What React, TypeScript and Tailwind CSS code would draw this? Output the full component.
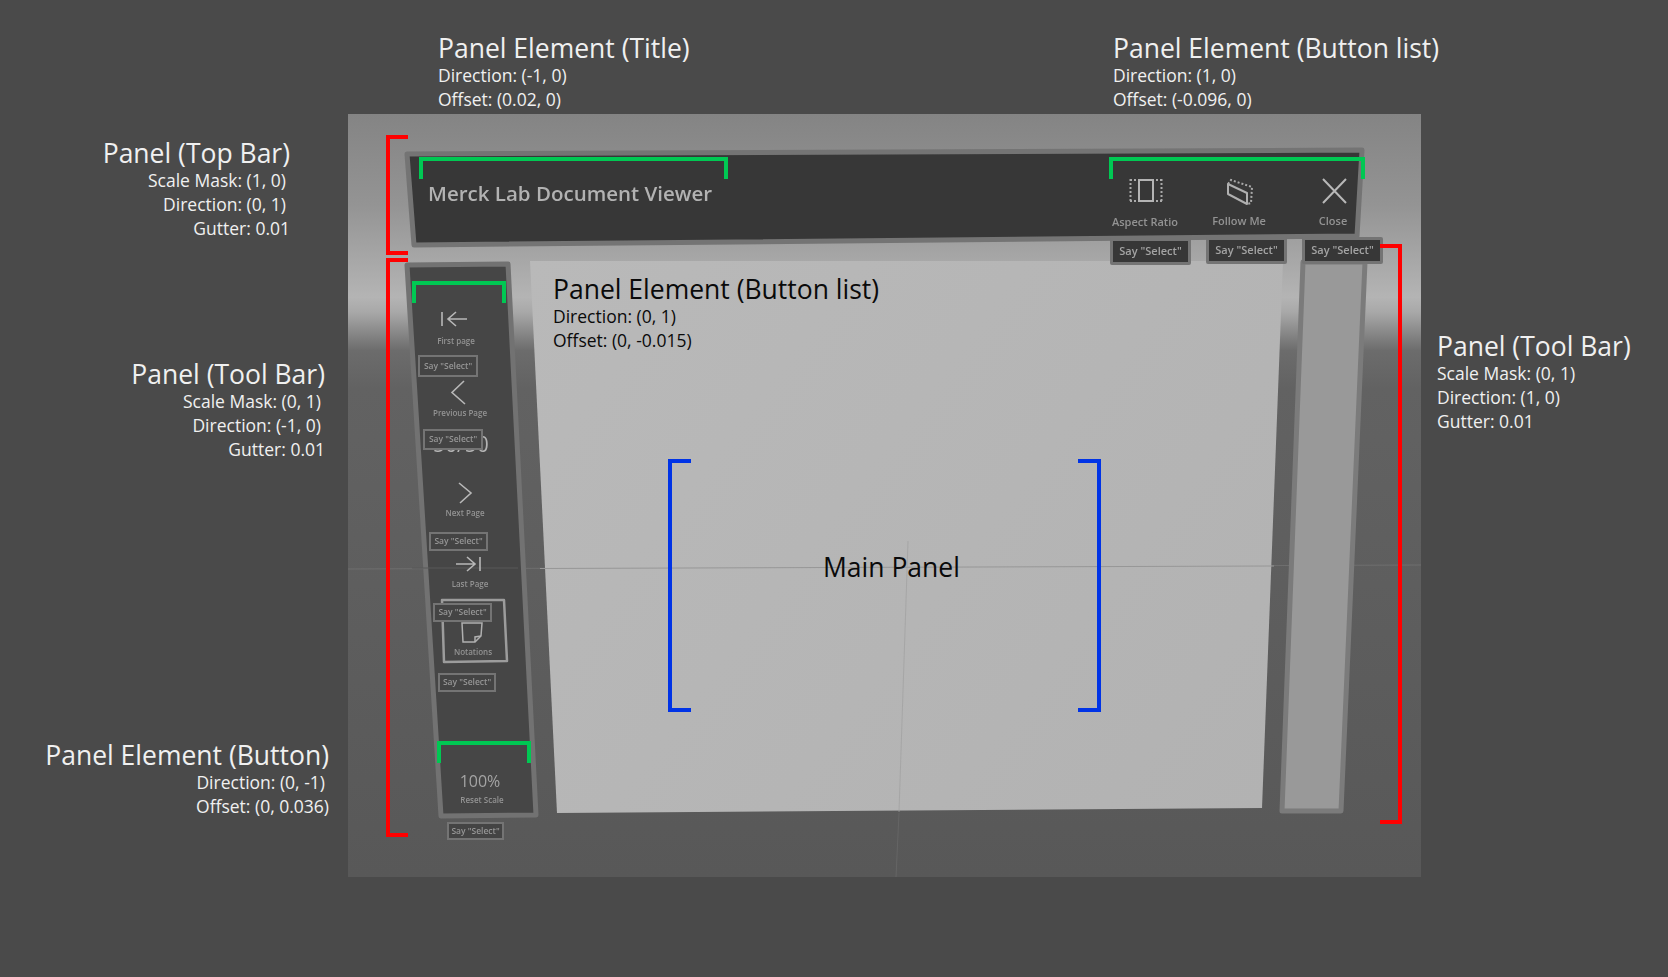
const Chip = ({ className }: { className: string }) => (
  <div
    className={`absolute flex items-center justify-center border-2 border-[#747474] bg-[#444] text-[8.5px] font-semibold text-[#969696] blur-[0.3px] ${className}`}
  >
    {'Say "Select"'}
  </div>
);

const TopChip = ({ className }: { className: string }) => (
  <div
    className={`flex h-[27px] w-[81px] items-center justify-center rounded-[2px] border-[3px] border-[#747474] bg-[#373737] text-[11px] font-semibold text-[#a4a4a4] blur-[0.3px] ${className}`}
  >
    {'Say "Select"'}
  </div>
);

const Caption = ({ className, text }: { className: string; text: string }) => (
  <div className={`absolute -translate-x-1/2 -translate-y-1/2 whitespace-nowrap font-semibold leading-none text-[#939393] blur-[0.3px] ${className}`}>
    {text}
  </div>
);

const Bracket = ({ className }: { className: string }) => <div className={`absolute ${className}`} />;

const Scene = () => (
  <svg className="absolute left-0 top-0" width="1668" height="977" viewBox="0 0 1668 977" fill="none">
    <defs>
      <linearGradient id="room" x1="0" y1="114" x2="0" y2="877" gradientUnits="userSpaceOnUse">
        <stop offset="0" stopColor="#848484" />
        <stop offset="0.12" stopColor="#949494" />
        <stop offset="0.24" stopColor="#b4b4b4" />
        <stop offset="0.26" stopColor="#a8a8a8" />
        <stop offset="0.29" stopColor="#848484" />
        <stop offset="0.31" stopColor="#6c6c6c" />
        <stop offset="0.36" stopColor="#626262" />
        <stop offset="1" stopColor="#585858" />
      </linearGradient>
      <linearGradient id="wall" x1="530" y1="258" x2="1262" y2="813" gradientUnits="userSpaceOnUse">
        <stop offset="0" stopColor="#b9b9b9" />
        <stop offset="1" stopColor="#b2b2b2" />
      </linearGradient>
    </defs>

    <rect x="348" y="114" width="1073" height="763" fill="url(#room)" />
    <path d="M348 569 L1421 565" stroke="#6f6f6f" strokeWidth="1" />
    <path d="M899 813 L896 877" stroke="#656565" strokeWidth="1" />

    {/* main panel */}
    <polygon points="530,261 1283,261 1262,808 557,813" fill="url(#wall)" />
    <path d="M540 568.5 L1274 566" stroke="#979797" strokeWidth="1" />
    <path d="M908 541 L899 812" stroke="#a0a0a0" strokeOpacity="0.7" strokeWidth="1" />

    {/* right tool bar */}
    <polygon points="1303,262 1365,262 1341,811 1282,811" fill="#999" stroke="#7b7b7b" strokeWidth="5" strokeLinejoin="round" />

    {/* left tool bar */}
    <polygon points="407,265 508,264 536,815 441,816" fill="#464646" stroke="#727272" strokeWidth="5" strokeLinejoin="round" />
    <path d="M412 568 L518 568" stroke="#585858" strokeWidth="1" />

    {/* top bar */}
    <polygon points="407,154 1362,150 1357,236 414,245" fill="#373737" stroke="#747474" strokeWidth="5" strokeLinejoin="round" />

    {/* aspect ratio icon */}
    <rect x="1139" y="180" width="14" height="21" stroke="#b4b4b4" strokeWidth="2" />
    <path d="M1130.5 179v23M1161.5 179v23M1130 180h6M1156 180h6M1130 201h6M1156 201h6" stroke="#aaa" strokeWidth="2" strokeDasharray="2 2" />

    {/* follow me icon */}
    <path d="M1228 184 L1247 193 L1247 204 L1228 194 Z" stroke="#b0b0b0" strokeWidth="2" strokeLinejoin="round" />
    <path d="M1228 184 L1231 180 L1252 187 L1251 203 L1247 204" stroke="#aaa" strokeWidth="2" strokeDasharray="2 2" />

    {/* close icon */}
    <path d="M1323 179 L1346 203 M1346 179 L1323 203" stroke="#b8b8b8" strokeWidth="2" />

    {/* first page */}
    <path d="M442 312v14M467 319h-19M456 312l-8 7 8 7" stroke="#b8b8b8" strokeWidth="1.6" />
    {/* previous */}
    <path d="M464 381 L452 392.5 L465 404" stroke="#b8b8b8" strokeWidth="1.6" />
    {/* next */}
    <path d="M459 483 L471 493 L460 503" stroke="#b8b8b8" strokeWidth="1.6" />
    {/* last page */}
    <path d="M456 564h19M467 557l8 7-8 7M480 557v14" stroke="#b8b8b8" strokeWidth="1.6" />

    {/* notations */}
    <path d="M442 600 L504 600 L507 661 L444 662 Z" stroke="#9c9c9c" strokeWidth="2.5" strokeLinejoin="round" />
    <path d="M462 623 L482 623 L481 636 L475 642 L463 642 Z" stroke="#b0b0b0" strokeWidth="1.5" />
    <path d="M481 636 L475 637 L475 642" stroke="#b0b0b0" strokeWidth="1.5" />
  </svg>
);

const Note = ({ className, title, lines, align }: { className: string; title: string; lines: string[]; align?: string }) => (
  <div className={`absolute flex flex-col ${align ?? ''} ${className}`}>
    <span className="text-[26.5px] leading-[28px]">{title}</span>
    <div className={`mt-px flex flex-col ${align ?? ''}`}>
      {lines.map((line) => (
        <span key={line} className="pr-[4px] text-[17.5px] leading-[24px] last:pr-0">
          {line}
        </span>
      ))}
    </div>
  </div>
);

export default function App() {
  return (
    <div className="relative h-[977px] w-[1668px] overflow-hidden bg-[#4a4a4a] font-['Open_Sans',sans-serif]">
      <Scene />

      {/* text inside the captured scene */}
      <div className="absolute left-[428px] top-[178px] whitespace-nowrap text-[20.5px] font-semibold leading-[30px] text-[#b2b2b2] blur-[0.3px]">
        Merck Lab Document Viewer
      </div>
      <Caption className="left-[1145px] top-[221px] text-[11px]" text="Aspect Ratio" />
      <Caption className="left-[1239px] top-[220px] text-[11px]" text="Follow Me" />
      <Caption className="left-[1333px] top-[220px] text-[11px]" text="Close" />
      <div className="absolute left-[1110px] top-[238px] flex items-start gap-[15px]">
        <TopChip className="" />
        <TopChip className="-mt-px" />
        <TopChip className="-mt-px" />
      </div>

      <Caption className="left-[456px] top-[341px] text-[8px]" text="First page" />
      <Caption className="left-[460px] top-[413px] text-[8px]" text="Previous Page" />
      <div className="absolute left-[433px] top-[431px] text-[21px] leading-[26px] text-[#b4b4b4] blur-[0.3px]">50/50</div>
      <Caption className="left-[465px] top-[513px] text-[8px]" text="Next Page" />
      <Caption className="left-[470px] top-[584px] text-[8px]" text="Last Page" />
      <Caption className="left-[473px] top-[652px] text-[8px]" text="Notations" />
      <div className="absolute left-[480px] top-[781px] -translate-x-1/2 -translate-y-1/2 text-[16px] leading-none text-[#a4a4a4] blur-[0.3px]">100%</div>
      <Caption className="left-[482px] top-[800px] text-[8px]" text="Reset Scale" />

      <Chip className="left-[418px] top-[355px] h-[22px] w-[60px]" />
      <Chip className="left-[423px] top-[429px] h-[21px] w-[60px]" />
      <Chip className="left-[429px] top-[532px] h-[19px] w-[59px]" />
      <Chip className="left-[433px] top-[603px] h-[19px] w-[59px]" />
      <Chip className="left-[438px] top-[673px] h-[19px] w-[58px]" />
      <Chip className="left-[447px] top-[822px] h-[18px] w-[57px]" />

      {/* brackets */}
      <Bracket className="left-[386px] top-[135px] h-[120px] w-[22px] border-y-4 border-l-4 border-[#ff0000]" />
      <Bracket className="left-[386px] top-[258px] h-[579px] w-[22px] border-y-4 border-l-4 border-[#ff0000]" />
      <Bracket className="left-[1380px] top-[244px] h-[580px] w-[22px] border-y-4 border-r-4 border-[#ff0000]" />
      <Bracket className="left-[419px] top-[157px] h-[22px] w-[309px] border-x-4 border-t-4 border-[#00c853]" />
      <Bracket className="left-[1109px] top-[157px] h-[22px] w-[256px] border-x-4 border-t-4 border-[#00c853]" />
      <Bracket className="left-[412px] top-[281px] h-[22px] w-[94px] border-x-4 border-t-4 border-[#00c853]" />
      <Bracket className="left-[437px] top-[741px] h-[22px] w-[94px] border-x-4 border-t-4 border-[#00c853]" />
      <Bracket className="left-[668px] top-[459px] h-[253px] w-[23px] border-y-4 border-l-4 border-[#0033e6]" />
      <Bracket className="left-[1078px] top-[459px] h-[253px] w-[23px] border-y-4 border-r-4 border-[#0033e6]" />

      {/* annotations */}
      <Note className="left-[438px] top-[34px] text-[#f0f0f0]" title="Panel Element (Title)" lines={['Direction: (-1, 0)', 'Offset: (0.02, 0)']} />
      <Note className="left-[1113px] top-[34px] text-[#f0f0f0]" title="Panel Element (Button list)" lines={['Direction: (1, 0)', 'Offset: (-0.096, 0)']} />
      <Note className="right-[1378px] top-[139px] text-[#f0f0f0]" align="items-end" title="Panel (Top Bar)" lines={['Scale Mask: (1, 0)', 'Direction: (0, 1)', 'Gutter: 0.01']} />
      <Note className="right-[1343px] top-[360px] text-[#f0f0f0]" align="items-end" title="Panel (Tool Bar)" lines={['Scale Mask: (0, 1)', 'Direction: (-1, 0)', 'Gutter: 0.01']} />
      <Note className="right-[1339px] top-[741px] text-[#f0f0f0]" align="items-end" title="Panel Element (Button)" lines={['Direction: (0, -1)', 'Offset: (0, 0.036)']} />
      <Note className="left-[1437px] top-[332px] text-[#f0f0f0]" title="Panel (Tool Bar)" lines={['Scale Mask: (0, 1)', 'Direction: (1, 0)', 'Gutter: 0.01']} />
      <Note className="left-[553px] top-[275px] text-[#0a0a0a]" title="Panel Element (Button list)" lines={['Direction: (0, 1)', 'Offset: (0, -0.015)']} />
      <div className="absolute left-[823px] top-[553px] text-[26.5px] leading-[28px] text-[#0a0a0a]">Main Panel</div>
    </div>
  );
}
